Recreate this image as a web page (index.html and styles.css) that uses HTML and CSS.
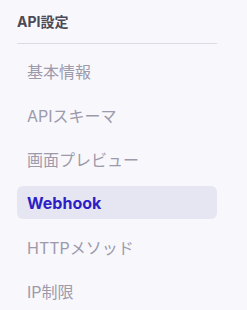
FILE: index.html
```html
<!DOCTYPE html>
<html lang="ja">
<head>
<meta charset="utf-8">
<link rel="stylesheet" href="styles.css">
</head>
<body>
<aside class="sidebar">
  <div class="sidebar-head">API設定</div>
  <nav class="menu">
    <a class="menu-item">基本情報</a>
    <a class="menu-item">APIスキーマ</a>
    <a class="menu-item">画面プレビュー</a>
    <a class="menu-item active">Webhook</a>
    <a class="menu-item">HTTPメソッド</a>
    <a class="menu-item">IP制限</a>
  </nav>
</aside>
</body>
</html>
```
FILE: styles.css
```css
html, body {
  margin: 0;
  padding: 0;
  background: #f8f7fc;
}
body {
  font-family: Inter, "Noto Sans CJK JP", sans-serif;
  width: 247px;
  height: 310px;
  overflow: hidden;
}
.sidebar {
  padding: 0 30px 0 17px;
}
.sidebar-head {
  padding-top: 14px;
  padding-bottom: 13px;
  line-height: 16px;
  font-size: 14px;
  font-weight: 700;
  color: #4b4a57;
  border-bottom: 1px solid #dddce5;
}
.menu {
  display: flex;
  flex-direction: column;
  gap: 11px;
  margin-top: 10px;
}
.menu-item {
  display: flex;
  align-items: center;
  height: 33px;
  padding: 0 10px;
  border-radius: 6px;
  font-size: 16px;
  color: #9d9aab;
}
.menu-item.active {
  background: #e6e5f2;
  color: #2d1ec5;
  font-weight: 700;
}
```
